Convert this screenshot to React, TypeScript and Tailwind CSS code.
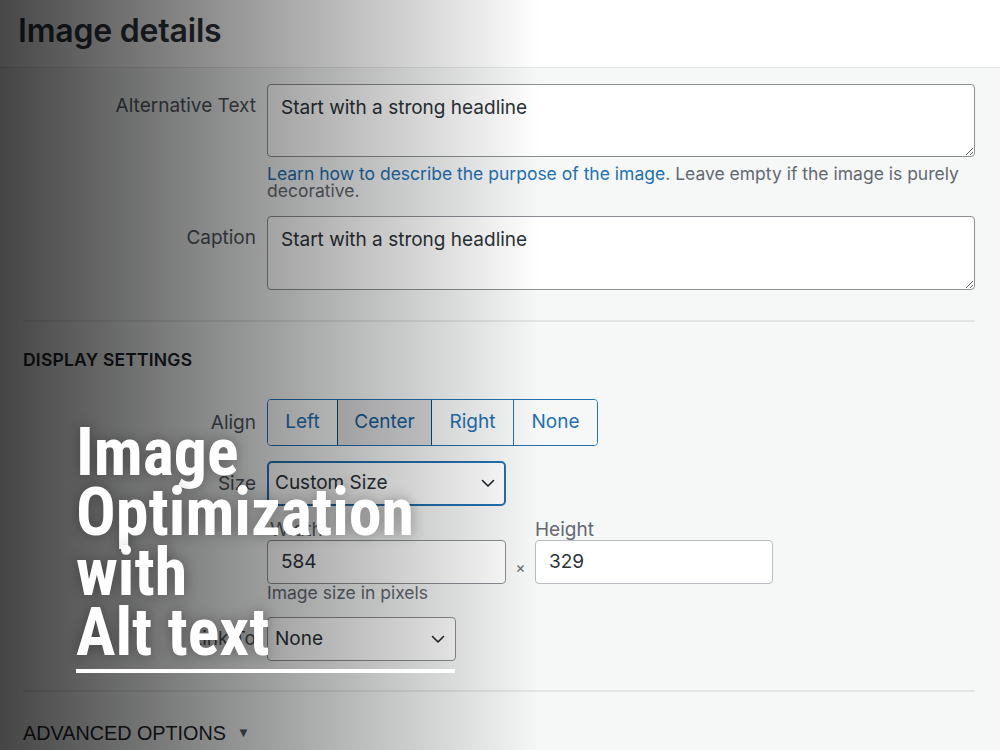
import React from "react";

const Chevron = () => (
  <svg width="14" height="9" viewBox="0 0 14 9" fill="none">
    <path d="M1.5 1.5 L7 7 L12.5 1.5" stroke="#1d2327" strokeWidth="1.6" strokeLinecap="round" strokeLinejoin="round" />
  </svg>
);

export default function App() {
  const sans = { fontFamily: "Inter, 'Noto Sans', sans-serif" };
  return (
    <div className="relative w-[1000px] h-[750px] overflow-hidden bg-[#f6f7f7]" style={sans}>
      {/* header */}
      <div className="h-[68px] bg-white border-b border-[#e4e5e7] flex items-center pl-[18px]">
        <h1 className="text-[32px] font-semibold text-[#2c3338] tracking-[-0.2px] leading-none -mt-[6px]">Image details</h1>
      </div>

      {/* form */}
      <div className="flex flex-col">
        <div className="grid grid-cols-[256px_708px] gap-x-[11px] mt-[16px]">
          <div className="text-right text-[19px] text-[#50575e] pt-[10px] leading-[24px]">Alternative Text</div>
          <div>
            <textarea
              readOnly
              defaultValue="Start with a strong headline"
              className="block w-full h-[73px] rounded-[4px] border border-[#8c8f94] bg-white px-[13px] pt-[11px] text-[19px] leading-[24px] text-[#2c3338] outline-none"
            />
            <p className="mt-[8px] text-[17.5px] leading-[17px] text-[#646970]">
              <span className="text-[#2271b1]">Learn how to describe the purpose of the image</span>. Leave empty if the image is purely
              <br />
              decorative.
            </p>
          </div>
        </div>

        <div className="grid grid-cols-[256px_708px] gap-x-[11px] mt-[17px]">
          <div className="text-right text-[19px] text-[#50575e] pt-[10px] leading-[24px]">Caption</div>
          <textarea
            readOnly
            defaultValue="Start with a strong headline"
            className="block w-full h-[74px] rounded-[4px] border border-[#8c8f94] bg-white px-[13px] pt-[11px] text-[19px] leading-[24px] text-[#2c3338] outline-none"
          />
        </div>

        <div className="mt-[30px] ml-[23px] mr-[25px] h-[2px] bg-[#e4e5e7]" />

        <div className="mt-[28px] ml-[23px] text-[17.5px] leading-[20px] font-semibold text-[#1d2327] tracking-[0.2px]">DISPLAY SETTINGS</div>

        <div className="grid grid-cols-[256px_708px] gap-x-[11px] mt-[29px]">
          <div className="text-right text-[19px] text-[#50575e] leading-[47px]">Align</div>
          <div className="flex">
            <div className="flex h-[47px] rounded-[4px] border border-[#2271b1] overflow-hidden text-[19px] text-[#2271b1]">
              <div className="w-[69px] flex items-center justify-center bg-[#f6f7f7]">Left</div>
              <div className="w-[95px] flex items-center justify-center bg-[#dcdcde] border-x border-[#0a4b78] text-[#135e96]">Center</div>
              <div className="w-[82px] flex items-center justify-center bg-[#f6f7f7] border-r border-[#2271b1]">Right</div>
              <div className="w-[83px] flex items-center justify-center bg-[#f6f7f7]">None</div>
            </div>
          </div>
        </div>

        <div className="grid grid-cols-[256px_708px] gap-x-[11px] mt-[15px]">
          <div className="text-right text-[19px] text-[#50575e] leading-[45px]">Size</div>
          <div className="flex">
            <div className="w-[239px] h-[45px] rounded-[5px] border-2 border-[#2271b1] bg-white flex items-center justify-between pl-[6px] pr-[9px] text-[19px] text-[#2c3338]">
              <span>Custom Size</span>
              <Chevron />
            </div>
          </div>
        </div>

        <div className="ml-[267px] mt-[14px] flex items-start">
          <div className="flex flex-col">
            <div className="text-[19px] leading-[20px] text-[#646970] pl-[3px]">Width</div>
            <div className="w-[239px] h-[44px] rounded-[4px] border border-[#8c8f94] bg-white flex items-center pl-[13px] text-[19px] text-[#2c3338]">584</div>
          </div>
          <div className="w-[29px] pt-[37px] text-center text-[15px] text-[#646970]">×</div>
          <div className="flex flex-col">
            <div className="text-[19px] leading-[20px] text-[#646970]">Height</div>
            <div className="w-[238px] h-[44px] rounded-[4px] border border-[#b9bcc0] bg-white flex items-center pl-[13px] text-[19px] text-[#2c3338]">329</div>
          </div>
        </div>
        <div className="ml-[267px] text-[17.5px] leading-[18px] text-[#646970]">Image size in pixels</div>

        <div className="grid grid-cols-[256px_708px] gap-x-[11px] mt-[15px]">
          <div className="text-right text-[19px] text-[#50575e] leading-[44px]">Link To</div>
          <div className="flex">
            <div className="w-[189px] h-[44px] rounded-[4px] border border-[#8c8f94] bg-white flex items-center justify-between pl-[7px] pr-[10px] text-[19px] text-[#2c3338]">
              <span>None</span>
              <Chevron />
            </div>
          </div>
        </div>

        <div className="mt-[29px] ml-[23px] mr-[25px] h-[2px] bg-[#e4e5e7]" />

        <div className="mt-[30px] ml-[23px] flex items-center gap-[11px] text-[19.8px] leading-[22px] text-[#1d2327]" style={{ fontFamily: "'Liberation Sans', Arial, sans-serif" }}>
          <span>ADVANCED OPTIONS</span>
          <span className="text-[13px] text-[#50575e]">▼</span>
        </div>
      </div>

      {/* dark gradient overlay */}
      <div className="absolute inset-0 pointer-events-none bg-[linear-gradient(to_right,rgba(0,0,0,0.72)_0px,rgba(0,0,0,0)_540px)]" />

      {/* title overlay */}
      <div
        className="absolute left-[76px] top-[423px] text-white font-bold text-[66px] leading-[60px] [text-shadow:0_0_14px_rgba(0,0,0,0.35)]"
        style={{ fontFamily: "'Liberation Sans Narrow', 'Roboto Condensed', Roboto, sans-serif" }}
      >
        <div>Image</div>
        <div>Optimization</div>
        <div>with</div>
        <div>Alt text</div>
      </div>
      <div className="absolute left-[76px] top-[669px] w-[379px] h-[4px] bg-white" />
    </div>
  );
}
